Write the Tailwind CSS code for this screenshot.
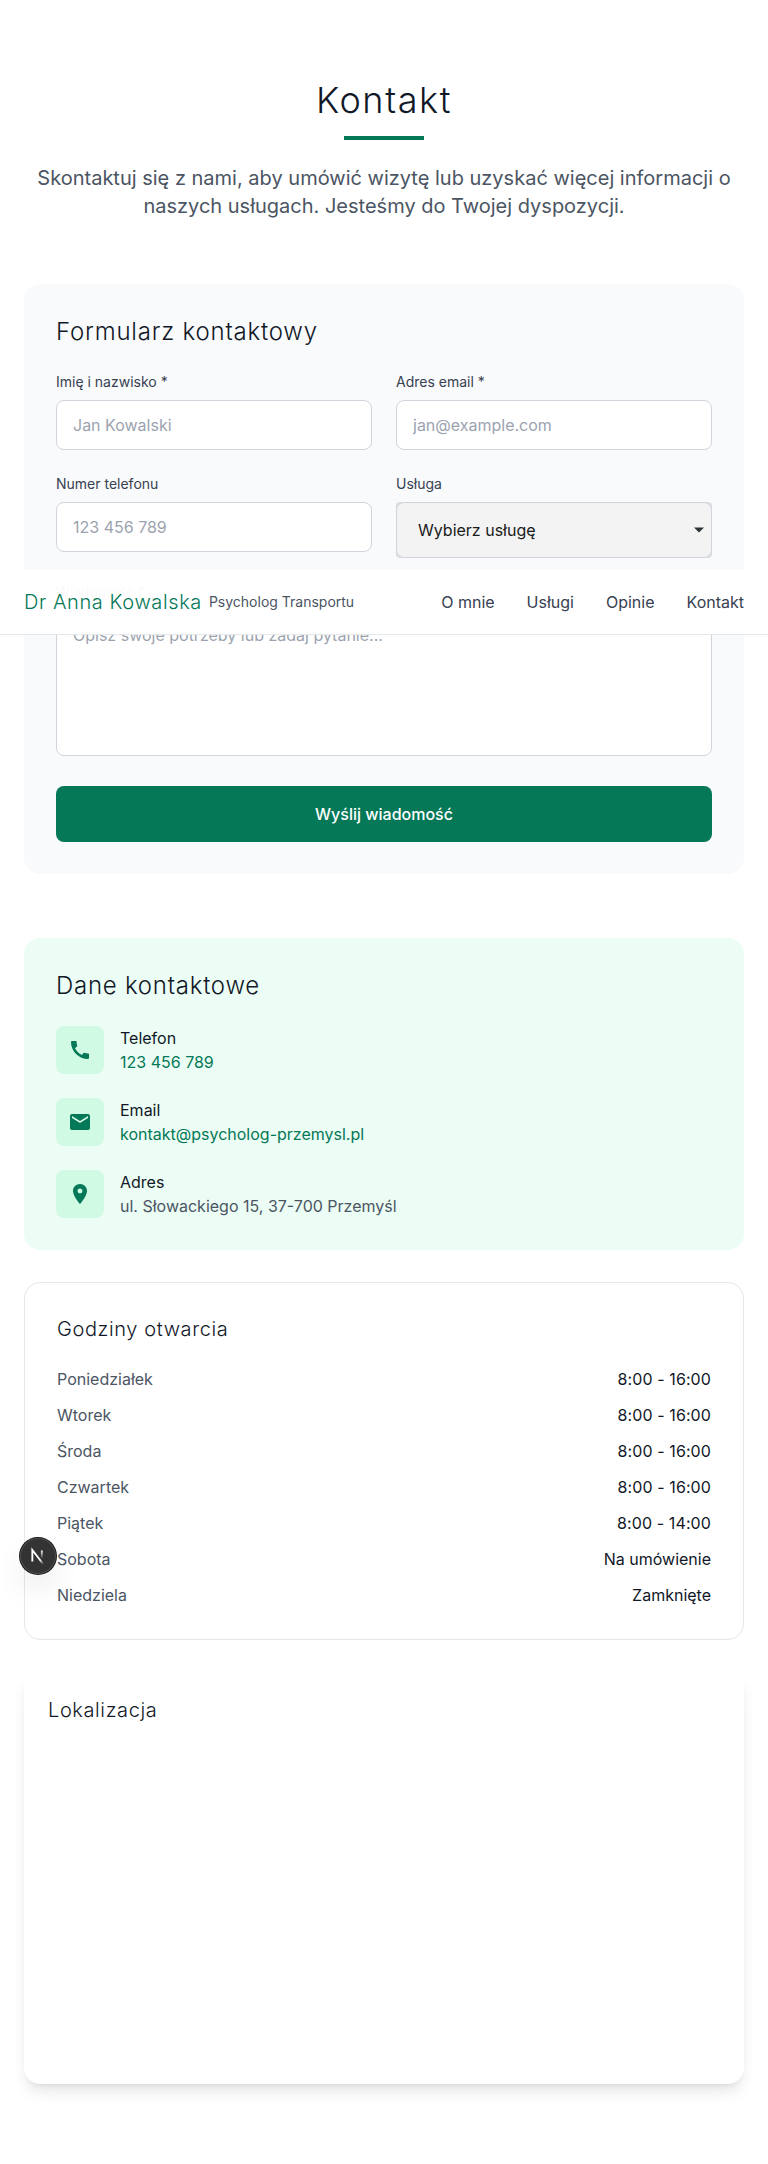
<!DOCTYPE html>
<html lang="pl">
<head>
<meta charset="utf-8">
<title>Kontakt</title>
<script src="https://cdn.jsdelivr.net/npm/@tailwindcss/browser@4"></script>
</head>
<body class="relative bg-white text-base text-[#111827] antialiased font-[Inter,'Liberation_Sans',sans-serif]">
<main class="px-6 py-20">
  <div class="mb-16 text-center">
    <h1 class="mb-4 text-4xl font-light tracking-[1.6px] text-[#111827]">Kontakt</h1>
    <div class="mx-auto mb-6 h-1 w-20 bg-[#047857]"></div>
    <p class="mx-auto max-w-3xl text-xl text-[#4b5563]">Skontaktuj się z nami, aby umówić wizytę lub uzyskać więcej informacji o naszych usługach. Jesteśmy do Twojej dyspozycji.</p>
  </div>

  <div class="grid gap-16">
    <section class="rounded-2xl bg-[#f9fafb] p-8">
      <h2 class="mb-6 text-2xl font-light tracking-[0.8px]">Formularz kontaktowy</h2>
      <form class="space-y-6">
        <div class="grid grid-cols-2 gap-6">
          <div>
            <label class="mb-2 block text-sm text-[#374151]">Imię i nazwisko *</label>
            <input type="text" placeholder="Jan Kowalski" class="block h-[50px] w-full rounded-lg border border-[#d1d5db] bg-white px-4 py-3 placeholder:text-[#9ca3af]">
          </div>
          <div>
            <label class="mb-2 block text-sm text-[#374151]">Adres email *</label>
            <input type="email" placeholder="jan@example.com" class="block h-[50px] w-full rounded-lg border border-[#d1d5db] bg-white px-4 py-3 placeholder:text-[#9ca3af]">
          </div>
          <div>
            <label class="mb-2 block text-sm text-[#374151]">Numer telefonu</label>
            <input type="tel" placeholder="123 456 789" class="block h-[50px] w-full rounded-lg border border-[#d1d5db] bg-white px-4 py-3 placeholder:text-[#9ca3af]">
          </div>
          <div>
            <label class="mb-2 block text-sm text-[#374151]">Usługa</label>
            <div class="relative rounded-[4px] bg-[#dcdfe2]">
              <select class="block h-14 w-full appearance-none rounded-lg border border-[#d1d5db] bg-[#f3f3f3] px-[21px] text-[#1a1a1a]"><option>Wybierz usługę</option></select>
              <svg class="absolute right-2 top-[25px] h-[6px] w-[10px]" viewBox="0 0 10 6" fill="#2e3436"><path d="M0 .5h10L5 5.5z"/></svg>
            </div>
          </div>
        </div>
        <div>
          <label class="mb-2 block text-sm text-[#374151]">Wiadomość *</label>
          <textarea rows="5" placeholder="Opisz swoje potrzeby lub zadaj pytanie..." class="mb-[30px] block h-[146px] w-full resize-none rounded-lg border border-[#d1d5db] bg-white px-4 py-3 placeholder:text-[#9ca3af]"></textarea>
          <button type="button" class="block h-14 w-full rounded-lg bg-[#047857] font-medium text-white">Wyślij wiadomość</button>
        </div>
      </form>
    </section>

    <div class="space-y-8">
      <section class="rounded-2xl bg-[#ecfdf5] p-8">
        <h2 class="mb-6 text-2xl font-light tracking-[0.75px]">Dane kontaktowe</h2>
        <div class="space-y-6">
          <div class="flex items-center gap-4">
            <div class="flex size-12 items-center justify-center rounded-lg bg-[#d1fae5]"><svg class="size-6" viewBox="0 0 24 24" fill="#047857"><path d="M20.01 15.38c-1.23 0-2.42-.2-3.53-.56a.977.977 0 0 0-1.01.24l-1.57 1.97c-2.83-1.35-5.48-3.9-6.89-6.83l1.95-1.66c.27-.28.35-.67.24-1.02-.37-1.11-.56-2.3-.56-3.53 0-.54-.45-.99-.99-.99H4.19C3.65 3 3 3.24 3 3.99 3 13.28 10.73 21 20.01 21c.71 0 .99-.63.99-1.18v-3.45c0-.54-.45-.99-.99-.99z"/></svg></div>
            <div><h3>Telefon</h3><p class="text-[#047857]">123 456 789</p></div>
          </div>
          <div class="flex items-center gap-4">
            <div class="flex size-12 items-center justify-center rounded-lg bg-[#d1fae5]"><svg class="size-6" viewBox="0 0 24 24" fill="#047857"><path d="M20 4H4c-1.1 0-1.99.9-1.99 2L2 18c0 1.1.9 2 2 2h16c1.1 0 2-.9 2-2V6c0-1.1-.9-2-2-2zm0 4l-8 5-8-5V6l8 5 8-5v2z"/></svg></div>
            <div><h3>Email</h3><p class="text-[#047857]">kontakt@psycholog-przemysl.pl</p></div>
          </div>
          <div class="flex items-center gap-4">
            <div class="flex size-12 items-center justify-center rounded-lg bg-[#d1fae5]"><svg class="size-6" viewBox="0 0 24 24" fill="#047857"><path d="M12 2C8.13 2 5 5.13 5 9c0 5.25 7 13 7 13s7-7.75 7-13c0-3.87-3.13-7-7-7zm0 9.5a2.5 2.5 0 0 1 0-5 2.5 2.5 0 0 1 0 5z"/></svg></div>
            <div><h3>Adres</h3><p class="text-[#4b5563]">ul. Słowackiego 15, 37-700 Przemyśl</p></div>
          </div>
        </div>
      </section>

      <section class="rounded-2xl border border-[#e5e7eb] bg-white p-8">
        <h2 class="mb-6 text-xl font-light tracking-[0.6px]">Godziny otwarcia</h2>
        <div class="space-y-3">
          <div class="flex justify-between"><span class="text-[#4b5563]">Poniedziałek</span><span class="tracking-[0.1px]">8:00 - 16:00</span></div>
          <div class="flex justify-between"><span class="text-[#4b5563]">Wtorek</span><span class="tracking-[0.1px]">8:00 - 16:00</span></div>
          <div class="flex justify-between"><span class="text-[#4b5563]">Środa</span><span class="tracking-[0.1px]">8:00 - 16:00</span></div>
          <div class="flex justify-between"><span class="text-[#4b5563]">Czwartek</span><span class="tracking-[0.1px]">8:00 - 16:00</span></div>
          <div class="flex justify-between"><span class="text-[#4b5563]">Piątek</span><span class="tracking-[0.1px]">8:00 - 14:00</span></div>
          <div class="flex justify-between"><span class="text-[#4b5563]">Sobota</span><span>Na umówienie</span></div>
          <div class="flex justify-between"><span class="text-[#4b5563]">Niedziela</span><span>Zamknięte</span></div>
        </div>
      </section>

      <section class="h-[412px] rounded-2xl bg-white p-6 shadow-lg">
        <h2 class="text-xl font-light tracking-[0.6px]">Lokalizacja</h2>
      </section>
    </div>
  </div>
</main>

<header class="absolute left-0 top-[570px] flex h-[65px] w-full items-center justify-between border-b border-[#e5e7eb] bg-white/97 px-6">
  <div class="flex items-center gap-[7px]">
    <span class="text-xl font-light tracking-[0.6px] text-[#047857]">Dr Anna Kowalska</span>
    <span class="text-sm text-[#4b5563]">Psycholog Transportu</span>
  </div>
  <nav class="flex gap-8 text-[#374151]"><a>O mnie</a><a>Usługi</a><a>Opinie</a><a>Kontakt</a></nav>
</header>

<div class="absolute left-5 top-[1538px] flex size-9 items-center justify-center rounded-full bg-[#333] shadow-[0_0_0_1px_#171717,inset_0_0_0_1px_rgba(255,255,255,0.14),0_16px_32px_-8px_rgba(0,0,0,0.24)]">
  <svg class="size-10 shrink-0" viewBox="0 0 40 40" fill="none">
    <defs>
      <linearGradient id="diag" x1="9.956" y1="11.123" x2="15.478" y2="17.967" gradientUnits="userSpaceOnUse"><stop stop-color="#fff"/><stop offset=".604" stop-color="#fff" stop-opacity="0"/><stop offset="1" stop-color="#fff" stop-opacity="0"/></linearGradient>
      <linearGradient id="stem" x1="11.822" y1="1.4" x2="11.791" y2="9.626" gradientUnits="userSpaceOnUse"><stop stop-color="#fff"/><stop offset="1" stop-color="#fff" stop-opacity="0"/></linearGradient>
    </defs>
    <g transform="translate(12 13)" stroke-width="1.86">
      <path d="M13.3 15.2 2.34 1v11.6" stroke="url(#diag)"/>
      <path d="M11.825 1.5v11.6" stroke="url(#stem)"/>
    </g>
  </svg>
</div>
</body>
</html>
